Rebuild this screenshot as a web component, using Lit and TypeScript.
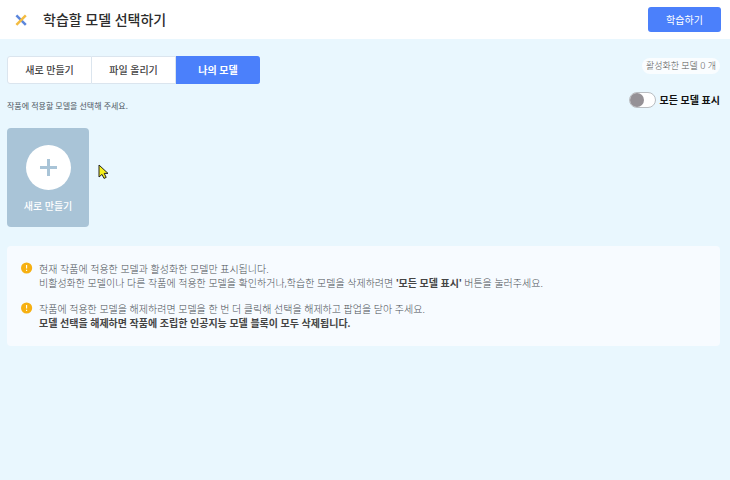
import { LitElement, html, css } from "lit";
import { customElement, state } from "lit/decorators.js";

const alertIcon = html`<svg class="alert" viewBox="0 0 12 12" aria-hidden="true">
  <circle cx="5.6" cy="6" r="5.6" fill="#f6b012" />
  <path d="M5.6 3v3.6" stroke="#fff" stroke-width="1.1" />
  <path d="M5.6 7.8v1.2" stroke="#fff" stroke-width="1.1" />
</svg>`;

@customElement("app-root")
export class AppRoot extends LitElement {
  @state() private tab = 2;
  @state() private showAll = false;

  static styles = css`
    :host {
      display: block;
      min-height: 100vh;
      background: #e9f7fe;
      color: #333;
      font-family: "Noto Sans", "Noto Sans CJK KR", sans-serif;
      font-size: 10px;
      line-height: 14px;
    }
    * {
      box-sizing: border-box;
    }
    button {
      margin: 0;
      padding: 0;
      border: 0;
      font: inherit;
      cursor: pointer;
    }
    .header {
      display: flex;
      align-items: center;
      height: 39px;
      padding: 0 9px 0 14px;
      background: #fff;
    }
    .logo {
      width: 14px;
      height: 14px;
    }
    .title {
      flex: 1;
      margin: 0 0 0 15px;
      font-size: 14px;
      font-weight: 500;
      line-height: 20px;
      color: #2c2c2c;
    }
    .train {
      width: 73px;
      height: 25px;
      border-radius: 3px;
      background: #4b80fb;
      color: #fff;
    }
    .main {
      padding: 17px 10px 16px 7px;
    }
    .top {
      display: flex;
      justify-content: space-between;
      align-items: flex-start;
    }
    .tabs {
      display: flex;
      height: 28px;
    }
    .tab {
      width: 84px;
      background: #fff;
      color: #444;
      font-weight: 500;
      border: 1px solid #dbe5ee;
      border-left-width: 0;
    }
    .tab:first-child {
      width: 85px;
      border-radius: 3px 0 0 3px;
      border-left-width: 1px;
    }
    .tab:last-child {
      border-radius: 0 3px 3px 0;
      border-right-width: 0;
    }
    .tab.active {
      background: #4b80fb;
      border-color: #4b80fb;
      color: #fff;
      font-weight: 700;
    }
    .guide {
      margin: 16px 0 0;
      font-size: 8px;
      line-height: 12px;
      color: #4d5863;
    }
    .side {
      display: flex;
      flex-direction: column;
      align-items: flex-end;
      gap: 18px;
      padding-top: 2px;
    }
    .count {
      padding: 0 4px;
      border-radius: 8px;
      background: #fafdff;
      font-size: 9px;
      line-height: 16px;
      font-weight: 300;
      color: #555;
    }
    .toggle {
      display: flex;
      align-items: center;
      gap: 4px;
      font-weight: 700;
      color: #111;
    }
    .switch {
      appearance: none;
      display: flex;
      align-items: center;
      width: 27px;
      height: 16px;
      margin: 0;
      border: 1px solid #b9bdc1;
      border-radius: 8px;
      background: #fff;
      cursor: pointer;
    }
    .switch::before {
      content: "";
      width: 14px;
      height: 14px;
      border-radius: 50%;
      background: #959196;
    }
    .switch:checked {
      justify-content: flex-end;
    }
    .switch:checked::before {
      background: #4b80fb;
    }
    .models {
      display: flex;
      margin-top: 16px;
    }
    .create {
      display: flex;
      flex-direction: column;
      align-items: center;
      gap: 9px;
      width: 82px;
      height: 99px;
      padding-top: 17px;
      border-radius: 4px;
      background: #a9c4d7;
      color: #fff;
      font-weight: 500;
    }
    .plus {
      width: 45px;
      height: 45px;
    }
    .notice {
      display: flex;
      flex-direction: column;
      gap: 12px;
      margin: 19px 0 0;
      padding: 16px 14px;
      border-radius: 4px;
      background: #f7fbff;
      list-style: none;
      color: #4a5056;
      font-weight: 300;
    }
    .item {
      display: flex;
      gap: 6px;
    }
    .alert {
      flex: none;
      width: 12px;
      height: 12px;
    }
    .text {
      margin: 0;
    }
    .strong {
      font-weight: 700;
      color: #444;
    }
    .cursor {
      position: absolute;
      left: 98px;
      top: 164px;
      width: 11px;
      height: 16px;
      pointer-events: none;
    }
  `;

  render() {
    return html`
      <header class="header">
        <svg class="logo" viewBox="0 0 14 14" fill="none" stroke-width="2.5" aria-hidden="true">
          <path d="M2.4 2.4 11.8 11.8" stroke="#5b86dc" />
          <path d="M11.8 2.4 2.4 11.8" stroke="#f3bb40" />
        </svg>
        <h1 class="title">학습할 모델 선택하기</h1>
        <button class="train" type="button">학습하기</button>
      </header>
      <main class="main">
        <div class="top">
          <div>
            <nav class="tabs">
              ${["새로 만들기", "파일 올리기", "나의 모델"].map(
                (label, i) => html`<button
                  type="button"
                  class="tab ${this.tab === i ? "active" : ""}"
                  @click=${() => (this.tab = i)}
                >${label}</button>`
              )}
            </nav>
            <p class="guide">작품에 적용할 모델을 선택해 주세요.</p>
          </div>
          <div class="side">
            <span class="count">활성화한 모델 0 개</span>
            <label class="toggle">
              <input
                class="switch"
                type="checkbox"
                role="switch"
                .checked=${this.showAll}
                @change=${() => (this.showAll = !this.showAll)}
              />
              모든 모델 표시
            </label>
          </div>
        </div>
        <div class="models">
          <button class="create" type="button">
            <svg class="plus" viewBox="0 0 45 45" aria-hidden="true">
              <circle cx="22.5" cy="22.5" r="22.5" fill="#fff" />
              <path d="M22.5 14v17M14 22.5h17" stroke="#a9c4d7" stroke-width="3" />
            </svg>
            새로 만들기
          </button>
        </div>
        <ul class="notice">
          <li class="item">
            ${alertIcon}
            <p class="text">
              현재 작품에 적용한 모델과 활성화한 모델만 표시됩니다.<br />
              비활성화한 모델이나 다른 작품에 적용한 모델을 확인하거나,학습한 모델을 삭제하려면
              <b class="strong">'모든 모델 표시'</b> 버튼을 눌러주세요.
            </p>
          </li>
          <li class="item">
            ${alertIcon}
            <p class="text">
              작품에 적용한 모델을 해제하려면 모델을 한 번 더 클릭해 선택을 해제하고 팝업을 닫아 주세요.<br />
              <b class="strong">모델 선택을 해제하면 작품에 조립한 인공지능 모델 블록이 모두 삭제됩니다.</b>
            </p>
          </li>
        </ul>
      </main>
      <svg class="cursor" viewBox="0 0 11 16" aria-hidden="true">
        <path
          d="M1 1v12l3-2.6 2 4 2.2-1-2-4H10Z"
          fill="#f4ee1c"
          stroke="#222"
          stroke-width="1"
          stroke-linejoin="round"
        />
      </svg>
    `;
  }
}
